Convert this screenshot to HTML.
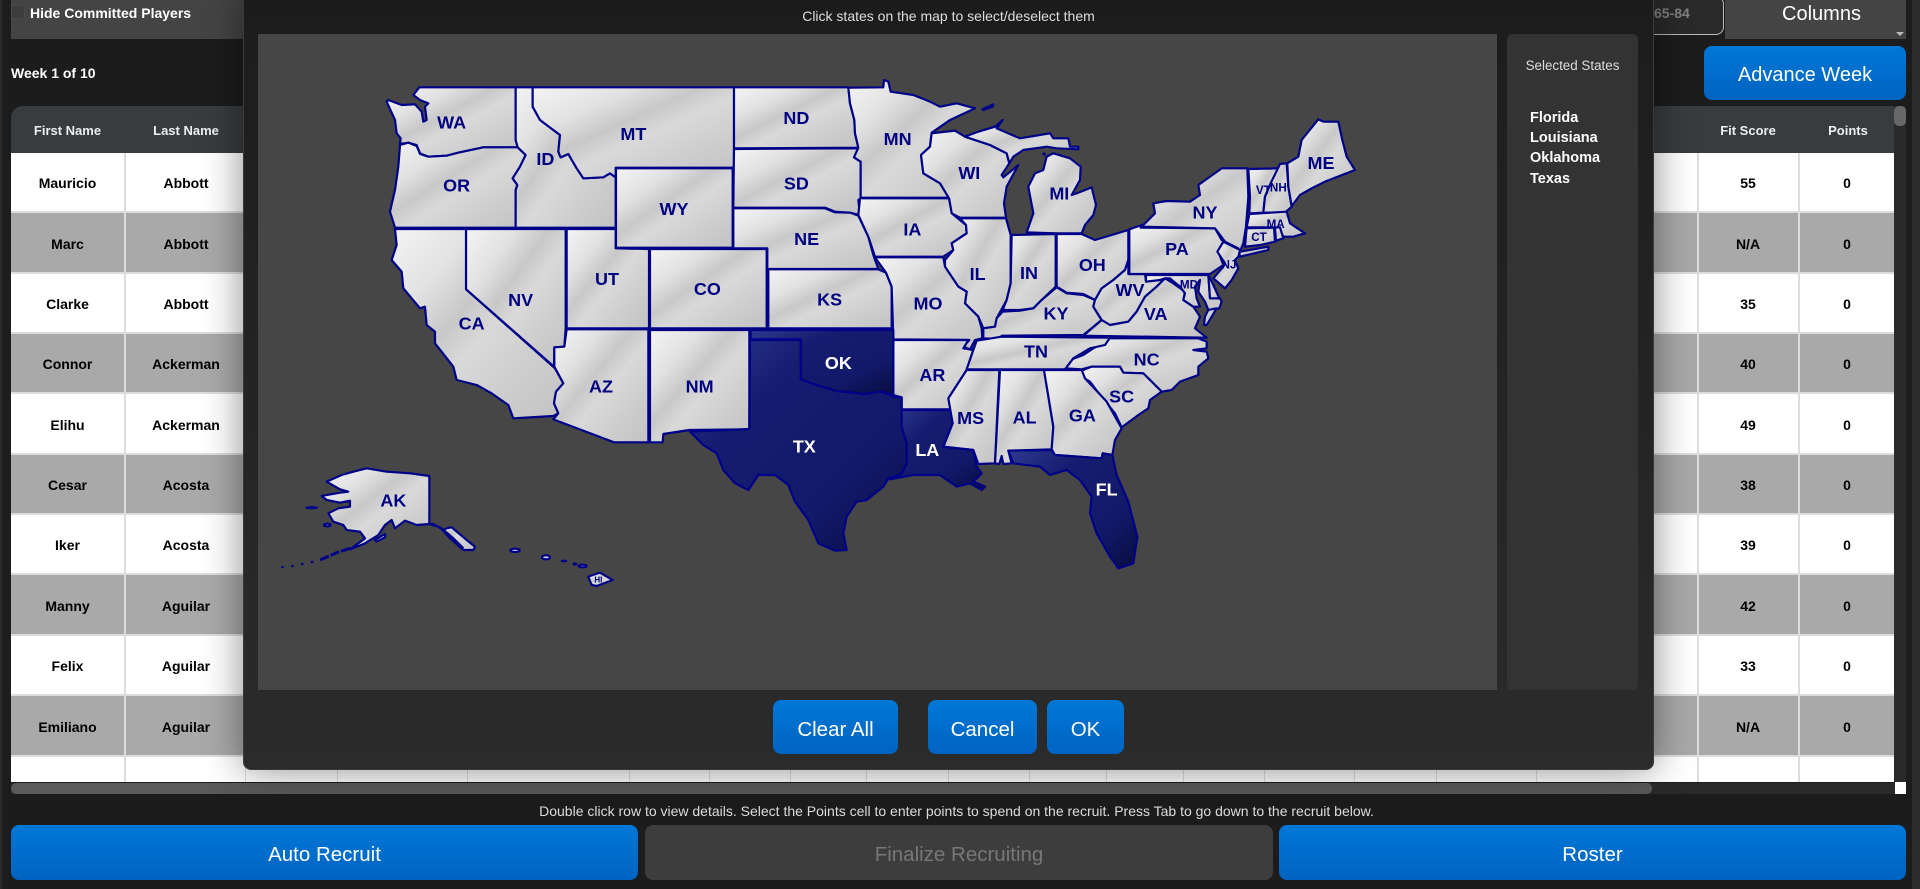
<!DOCTYPE html>
<html><head><meta charset="utf-8"><title>Recruiting</title>
<style>
*{box-sizing:border-box}
html,body{margin:0;padding:0;width:1920px;height:889px;overflow:hidden;background:#1c1c1c;font-family:"Liberation Sans",sans-serif;color:#fff}
.a{position:absolute}
.c{position:absolute;display:flex;align-items:center;justify-content:center;white-space:nowrap}
.btn{background:linear-gradient(#0078d7,#0063c1);border-radius:8px;color:#fff;font-size:20px;padding-top:5px}
.row{position:absolute;left:11px;width:1884px;border-bottom:2px solid #ddd;background:#fff;color:#000;font-size:14px;font-weight:bold}
.row.g{background:#a9a9a9}
.row i{position:absolute;top:0;bottom:0;width:2px;background:#ddd}
.row b{position:absolute;top:0;bottom:0;display:flex;align-items:center;justify-content:center;padding-top:2px}
.b1{left:0;width:113px}.b2{left:116px;width:118px}.b3{left:1687px;width:100px}.b4{left:1787px;width:98px}
.i1{left:113px}.i3{left:1686px}.i4{left:1787px}
.s{stroke:#000088;stroke-width:6.5;stroke-linejoin:round;fill:url(#gs)}
.x{stroke:#000088;stroke-width:6.5;stroke-linejoin:round;fill:url(#gx)}
.t{font-family:"Liberation Sans",sans-serif;font-weight:bold;font-size:54px;fill:#000080;text-anchor:middle}
.t2{font-size:35px}
.w{fill:#fff}
</style></head><body>

<div class="a" style="left:0;top:0;width:2px;height:889px;background:#2b2b2b"></div>
<div class="a" style="left:1912px;top:0;width:8px;height:889px;background:#2b2b2b"></div>

<!-- top bar -->
<div class="a" style="left:11px;top:0;width:240px;height:39px;background:#444"></div>
<div class="a" style="left:11px;top:5px;width:14px;height:14px;background:#3d3d3d;border:1px solid #4a4a4a;border-radius:2px"></div>
<div class="a" style="left:30px;top:5px;font-size:14px;font-weight:bold;line-height:16px;white-space:nowrap">Hide Committed Players</div>
<div class="a" style="left:1640px;top:-4px;width:84px;height:39px;background:#2a2a2a;border:1px solid #bbb;border-radius:8px"></div>
<div class="a" style="left:1654px;top:5px;font-size:14px;font-weight:bold;line-height:16px;color:#808080">65-84</div>
<div class="a" style="left:1725px;top:0;width:181px;height:39px;background:#444"></div>
<div class="c" style="left:1731px;top:0;width:181px;height:39px;font-size:20px;padding-bottom:10px">Columns</div>
<div class="a" style="left:1896px;top:32px;width:0;height:0;border-left:4px solid transparent;border-right:4px solid transparent;border-top:4px solid #bbb"></div>
<div class="a" style="left:11px;top:65px;font-size:14px;font-weight:bold;line-height:16px">Week 1 of 10</div>
<div class="c btn" style="left:1704px;top:46px;width:202px;height:54px;padding-top:4px">Advance Week</div>

<!-- table -->
<div class="a" style="left:11px;top:106px;width:1883px;height:47px;background:#383c3f;border-top-left-radius:12px"></div>
<div class="c" style="left:11px;top:106px;width:113px;height:49px;font-size:13px;font-weight:bold;color:#eee">First Name</div>
<div class="c" style="left:127px;top:106px;width:118px;height:49px;font-size:13px;font-weight:bold;color:#eee">Last Name</div>
<div class="c" style="left:1698px;top:106px;width:100px;height:49px;font-size:13px;font-weight:bold;color:#eee">Fit Score</div>
<div class="c" style="left:1799px;top:106px;width:98px;height:49px;font-size:13px;font-weight:bold;color:#eee">Points</div>

<div class="row" style="top:153px;height:60px"><i class="i1"></i><i class="i3"></i><i class="i4"></i><b class="b1">Mauricio</b><b class="b2">Abbott</b><b class="b3">55</b><b class="b4">0</b></div>
<div class="row g" style="top:213px;height:61px"><i class="i1"></i><i class="i3"></i><i class="i4"></i><b class="b1">Marc</b><b class="b2">Abbott</b><b class="b3">N/A</b><b class="b4">0</b></div>
<div class="row" style="top:274px;height:60px"><i class="i1"></i><i class="i3"></i><i class="i4"></i><b class="b1">Clarke</b><b class="b2">Abbott</b><b class="b3">35</b><b class="b4">0</b></div>
<div class="row g" style="top:334px;height:60px"><i class="i1"></i><i class="i3"></i><i class="i4"></i><b class="b1">Connor</b><b class="b2">Ackerman</b><b class="b3">40</b><b class="b4">0</b></div>
<div class="row" style="top:394px;height:61px"><i class="i1"></i><i class="i3"></i><i class="i4"></i><b class="b1">Elihu</b><b class="b2">Ackerman</b><b class="b3">49</b><b class="b4">0</b></div>
<div class="row g" style="top:455px;height:60px"><i class="i1"></i><i class="i3"></i><i class="i4"></i><b class="b1">Cesar</b><b class="b2">Acosta</b><b class="b3">38</b><b class="b4">0</b></div>
<div class="row" style="top:515px;height:60px"><i class="i1"></i><i class="i3"></i><i class="i4"></i><b class="b1">Iker</b><b class="b2">Acosta</b><b class="b3">39</b><b class="b4">0</b></div>
<div class="row g" style="top:575px;height:61px"><i class="i1"></i><i class="i3"></i><i class="i4"></i><b class="b1">Manny</b><b class="b2">Aguilar</b><b class="b3">42</b><b class="b4">0</b></div>
<div class="row" style="top:636px;height:60px"><i class="i1"></i><i class="i3"></i><i class="i4"></i><b class="b1">Felix</b><b class="b2">Aguilar</b><b class="b3">33</b><b class="b4">0</b></div>
<div class="row g" style="top:696px;height:61px"><i class="i1"></i><i class="i3"></i><i class="i4"></i><b class="b1">Emiliano</b><b class="b2">Aguilar</b><b class="b3">N/A</b><b class="b4">0</b></div>
<div class="row" style="top:757px;height:25px;border-bottom:0"><i class="i1"></i><i class="i3"></i><i class="i4"></i>
<i style="left:234px;width:1px"></i><i style="left:326px;width:1px"></i><i style="left:456px;width:1px"></i><i style="left:618px;width:1px"></i><i style="left:698px;width:1px"></i><i style="left:779px;width:1px"></i><i style="left:855px;width:1px"></i><i style="left:937px;width:1px"></i><i style="left:1018px;width:1px"></i><i style="left:1095px;width:1px"></i><i style="left:1172px;width:1px"></i><i style="left:1253px;width:1px"></i><i style="left:1343px;width:1px"></i><i style="left:1425px;width:1px"></i><i style="left:1525px;width:1px"></i></div>

<!-- scrollbars -->
<div class="a" style="left:1894px;top:106px;width:12px;height:676px;background:#2a2a2a"></div>
<div class="a" style="left:1894px;top:106px;width:12px;height:20px;background:#686868;border-radius:5px"></div>
<div class="a" style="left:11px;top:783px;width:1884px;height:11px;background:#2a2a2a"></div>
<div class="a" style="left:11px;top:783px;width:1641px;height:11px;background:#5a5a5a;border-radius:5px"></div>
<div class="a" style="left:1895px;top:782px;width:11px;height:12px;background:#fff"></div>

<!-- bottom -->
<div class="c" style="left:0;top:803px;width:1913px;height:16px;font-size:14px;color:#ddd">Double click row to view details. Select the Points cell to enter points to spend on the recruit. Press Tab to go down to the recruit below.</div>
<div class="c btn" style="left:11px;top:825px;width:627px;height:55px;font-size:20.5px">Auto Recruit</div>
<div class="c" style="left:645px;top:825px;width:628px;height:55px;background:#3d3d3d;border-radius:8px;font-size:20.5px;color:#777;padding-top:5px">Finalize Recruiting</div>
<div class="c btn" style="left:1279px;top:825px;width:627px;height:55px;font-size:20.5px">Roster</div>

<!-- modal -->
<div class="a" style="left:243px;top:-10px;width:1411px;height:780px;background:linear-gradient(#1c1c1c,#2b2b2b);border:1px solid #3a3a3a;border-radius:8px;box-shadow:0 0 40px rgba(0,0,0,.45)"></div>
<div class="c" style="left:244px;top:8px;width:1409px;height:16px;font-size:14px;color:#ddd">Click states on the map to select/deselect them</div>
<div class="a" style="left:258px;top:34px;width:1239px;height:656px;background:#464646"></div>
<div class="a" style="left:1507px;top:34px;width:131px;height:656px;background:#333;border-radius:5px"></div>
<div class="c" style="left:1507px;top:57px;width:131px;height:16px;font-size:13.4px;color:#ddd">Selected States</div>
<div class="a" style="left:1530px;top:108px;font-size:14.5px;font-weight:bold;line-height:20.2px">Florida<br>Louisiana<br>Oklahoma<br>Texas</div>
<div class="c btn" style="left:773px;top:700px;width:125px;height:54px;font-size:20.5px">Clear All</div>
<div class="c btn" style="left:928px;top:700px;width:109px;height:54px;font-size:20.5px">Cancel</div>
<div class="c btn" style="left:1047px;top:700px;width:77px;height:54px;font-size:20.5px">OK</div>

<svg class="a" style="left:0;top:0" width="1920" height="889" viewBox="0 0 1920 889" xmlns="http://www.w3.org/2000/svg">
<defs>
<linearGradient id="gs" x1="0" y1="0" x2="1" y2="1"><stop offset="0" stop-color="#f4f4f4"/><stop offset=".25" stop-color="#e2e2e2"/><stop offset=".42" stop-color="#c8c8c8"/><stop offset=".55" stop-color="#d9d9d9"/><stop offset=".75" stop-color="#cecece"/><stop offset="1" stop-color="#c2c2c2"/></linearGradient>
<linearGradient id="gx" x1="0" y1="0" x2="1" y2="1"><stop offset="0" stop-color="#2e3a8e"/><stop offset=".3" stop-color="#151d70"/><stop offset=".7" stop-color="#12196a"/><stop offset="1" stop-color="#090c40"/></linearGradient>
</defs>
<g transform="translate(370 70) scale(.33333)">
<!-- west -->
<polygon class="s" points="148,52 437,52 437,210 443,232 340,232 265,248 230,257 175,260 150,250 140,225 115,218 90,222 92,205 80,190 75,150 50,95 55,90 95,105 135,103 155,125 160,155 170,150 165,110 175,100 150,90 130,75"/>
<polygon class="s" points="90,225 115,218 140,228 150,252 175,260 230,257 265,248 340,232 443,232 467,255 450,290 428,325 442,345 437,360 437,473 75,473 60,425 75,360 85,290"/>
<polygon class="s" points="437,52 488,52 488,110 510,150 570,195 565,245 572,262 595,252 620,295 640,325 700,322 720,310 737,322 737,473 437,473 437,360 442,345 428,325 450,290 467,255 443,232 437,210"/>
<polygon class="s" points="488,52 1092,52 1092,293 737,293 737,322 720,310 700,322 640,325 620,295 595,252 572,262 565,245 570,195 510,150 488,110"/>
<polygon class="s" points="738,295 1088,295 1088,533 738,533"/>
<polygon class="s" points="1092,52 1435,52 1440,100 1453,150 1455,190 1465,233 1092,235"/>
<polygon class="s" points="1092,237 1465,235 1452,262 1472,275 1472,385 1465,390 1470,435 1440,428 1395,425 1365,413 1090,413"/>
<polygon class="s" points="1090,415 1365,415 1395,427 1440,428 1465,437 1495,500 1510,555 1525,597 1192,597 1192,535 1090,535"/>
<polygon class="s" points="1195,598 1525,598 1548,608 1565,650 1565,775 1195,775"/>
<polygon class="s" points="840,537 1190,537 1190,775 840,775"/>
<polygon class="s" points="590,477 737,477 737,535 837,537 837,775 590,775"/>
<polygon class="s" points="288,477 587,477 587,775 583,830 553,832 552,890 288,658"/>
<polygon class="s" points="75,477 288,477 288,658 555,895 580,940 558,965 552,1000 565,1030 550,1038 430,1045 415,1005 365,970 320,945 260,930 250,890 195,820 195,785 170,765 165,710 150,715 100,655 95,605 65,570 80,525"/>
<polygon class="s" points="590,778 835,778 835,1117 733,1117 550,1048 565,1030 552,1000 558,965 580,940 553,890 553,832 583,830"/>
<polygon class="s" points="840,780 1138,780 1138,1078 958,1080 880,1092 878,1117 840,1117"/>

<!-- north/east, zoom 4 coordinates -->
<g transform="translate(1440 0)">
<polygon class="s" points="-5,53 100,52 102,30 115,35 122,65 190,75 240,95 270,110 320,100 375,115 300,150 245,188 240,230 213,255 220,310 270,340 297,383 32,383 32,275 12,262 25,233 15,190 13,150 0,100"/>
<polygon class="s" points="397,118 430,103 428,110 400,120"/>
<polygon class="s" points="245,190 315,182 345,200 420,225 470,250 478,280 455,315 460,322 505,285 470,350 462,400 468,443 330,443 305,430 297,385 270,340 220,310 213,255 240,230"/>
<polygon class="s" points="345,200 385,185 435,170 458,150 440,175 510,205 600,190 610,205 655,205 660,230 685,230 685,238 620,235 590,230 520,240 490,260 478,280 470,250 420,225"/>
<polygon class="s" points="530,487 550,430 535,350 555,310 580,300 590,260 610,250 660,265 692,290 690,330 665,375 680,370 725,352 738,405 730,435 705,465 695,490 618,490"/>
<circle cx="582" cy="252" r="5" fill="#000088"/>
<polygon class="s" points="30,385 297,385 305,430 348,465 350,490 305,520 310,540 280,560 75,560 55,500 25,435"/>
<polygon class="s" points="330,445 468,445 482,495 482,640 470,690 440,745 435,770 400,775 385,740 345,700 350,665 325,650 285,590 285,570 310,540 305,520 350,490 348,465"/>
<polygon class="s" points="485,495 617,492 617,650 575,690 550,715 510,720 458,720 470,690 482,640"/>
<polygon class="s" points="620,492 695,492 735,510 835,480 835,570 825,600 790,630 755,655 735,690 700,672 650,668 620,650"/>
<polygon class="s" points="458,725 510,722 550,715 575,690 620,652 650,670 700,675 735,690 730,710 755,750 700,795 455,797 455,808 400,805 400,775 435,770 440,745"/>
<polygon class="s" points="75,562 280,562 285,590 325,650 350,665 345,700 385,740 395,775 397,805 375,810 360,838 340,830 358,810 130,808 125,650 108,608"/>
<polygon class="s" points="835,570 835,612 885,612 888,635 915,625 945,625 920,650 885,680 860,725 835,755 780,765 755,750 730,710 735,690 755,655 790,630 825,600"/>
<polygon class="s" points="700,797 755,750 780,765 835,755 860,725 885,680 920,650 945,625 970,640 1005,665 1000,690 1030,710 1050,740 1035,775 1070,803"/>
<polygon class="s" points="838,478 875,465 872,473 1095,475 1115,510 1125,515 1105,545 1120,585 1080,612 838,612"/>
<polygon class="s" points="875,470 915,430 910,400 950,393 1020,395 1050,375 1045,345 1115,295 1192,295 1195,380 1188,470 1180,520 1170,545 1255,530 1255,540 1170,560 1165,535 1125,515 1095,475"/>
<polygon class="s" points="1195,297 1285,295 1262,340 1245,380 1240,428 1198,430 1200,380"/>
<polygon class="s" points="1290,282 1310,280 1315,350 1325,410 1305,428 1240,428 1245,380 1262,340"/>
<polygon class="s" points="1312,280 1345,260 1355,210 1405,148 1420,155 1465,155 1477,210 1490,260 1515,300 1450,325 1425,335 1385,355 1350,375 1325,408 1315,350"/>
<polygon class="s" points="1198,432 1310,425 1320,460 1365,490 1330,500 1300,500 1285,472 1190,472"/>
<polygon class="s" points="1190,475 1272,473 1275,515 1230,525 1185,530"/>
<polygon class="s" points="1275,473 1290,472 1300,505 1278,512"/>
</g>

<!-- mid-atlantic, zoom 9 coordinates -->
<g transform="translate(2430 480)">
<polygon class="s" points="130,35 180,60 175,80 165,90 175,115 155,150 135,175 100,145 130,110 135,100 112,65"/>
<polygon class="s" points="-102,135 85,135 90,205 120,205 125,215 118,235 85,240 75,215 55,185 60,150 45,170 50,205 60,230 40,230 10,210 15,190 0,170 -30,145 -45,145 -60,150 -102,155"/>
<polygon class="s" points="85,135 90,205 118,205 100,165"/>
<polygon class="s" points="85,240 110,235 80,285 72,285 75,260"/>
</g>

<!-- carolinas, zoom 10 coordinates -->
<g transform="translate(2070 750)">
<polygon class="s" points="15,145 30,120 70,105 100,85 130,70 148,55 415,55 440,65 440,85 400,90 440,95 445,115 415,140 415,165 360,185 335,210 305,215 250,160 190,158 180,140 95,140 65,148"/>
<polygon class="s" points="65,152 95,140 180,140 190,158 250,160 305,215 270,240 265,265 235,285 185,322 165,280 120,225 90,185 65,170"/>
</g>

<!-- south, zoom 5 coordinates -->
<g transform="translate(930 750)">
<polygon class="s" points="640,60 865,60 850,85 880,90 860,150 805,235 812,268 665,268 665,232 640,225"/>
<polygon class="s" points="860,150 958,150 945,430 895,432 880,390 790,380 818,310 805,235"/>
<polygon class="s" points="960,150 1092,150 1120,320 1115,388 985,392 995,430 970,432 965,408 958,432 945,430"/>
<polygon class="s" points="1092,150 1205,150 1215,175 1280,245 1325,325 1305,360 1297,405 1268,400 1265,415 1125,405 1115,388 1120,320"/>
<polygon class="s" points="890,62 965,50 1290,53 1275,75 1230,85 1180,115 1155,148 860,148 880,90"/>
<polygon class="x" points="212,30 640,30 640,225 605,215 550,222 470,213 400,192 362,178 362,58 212,58"/>
<polygon class="x" points="210,60 362,60 362,178 400,192 470,213 550,222 605,215 640,230 665,232 665,320 680,370 680,430 665,462 625,475 610,500 560,540 530,545 500,590 490,640 500,690 465,692 415,670 385,600 345,545 325,495 285,465 235,465 205,510 165,490 130,450 110,400 70,375 30,335 208,327"/>
<polygon class="x" points="665,270 810,270 818,310 790,380 880,390 890,440 905,460 880,485 915,500 905,510 870,490 830,500 780,465 700,465 630,478 665,462 680,430 680,370 665,320"/>
<polygon class="x" points="985,392 1115,390 1125,405 1265,415 1268,400 1297,405 1310,465 1345,545 1372,650 1360,730 1315,745 1290,710 1250,640 1230,580 1235,530 1200,480 1160,450 1110,465 1080,440 1000,430"/>
</g>

<!-- AK / HI, zoom 6 coordinates -->
<g transform="translate(-300 1140)">
<polygon class="s" points="290,55 350,65 420,70 478,78 478,222 440,225 405,212 375,235 365,210 345,225 325,255 285,280 240,298 285,265 270,245 230,240 220,225 190,215 175,190 205,175 240,170 240,152 210,158 170,150 155,138 210,128 235,125 210,118 170,95 215,75 250,65"/>
<polygon class="s" points="478,222 510,232 540,265 580,300 610,300 615,290 590,270 545,232 530,235 520,240 490,222"/>
<polyline points="515,235 550,265 580,295" fill="none" stroke="#000088" stroke-width="7"/>
<polygon class="s" points="315,270 345,252 345,262 320,275"/>
<polyline points="240,295 200,308 145,332" fill="none" stroke="#000088" stroke-width="9" stroke-dasharray="28 6"/>
<polyline points="130,335 70,348 30,352" fill="none" stroke="#000088" stroke-width="6" stroke-dasharray="8 22"/>
<ellipse cx="125" cy="173" rx="20" ry="5" fill="#000088"/>
<ellipse class="s" cx="172" cy="225" rx="10" ry="4"/>
<ellipse class="s" cx="735" cy="301" rx="14" ry="5"/>
<ellipse class="s" cx="828" cy="322" rx="12" ry="6"/>
<ellipse cx="882" cy="333" rx="10" ry="4" fill="#000088"/>
<ellipse cx="915" cy="342" rx="7" ry="5" fill="#000088"/>
<ellipse class="s" cx="938" cy="348" rx="12" ry="4"/>
<polygon class="s" points="955,380 990,368 1028,390 980,408 965,405"/>
<text class="t" x="370" y="170">AK</text>
<text class="t" x="985" y="398" style="font-size:24px">HI</text>
</g>

<!-- labels -->
<text class="t" x="245" y="175">WA</text><text class="t" x="260" y="365">OR</text><text class="t" x="526" y="285">ID</text><text class="t" x="790" y="210">MT</text><text class="t" x="912" y="435">WY</text><text class="t" x="1279" y="162">ND</text><text class="t" x="1279" y="358">SD</text><text class="t" x="1310" y="525">NE</text><text class="t" x="305" y="778">CA</text><text class="t" x="452" y="708">NV</text><text class="t" x="711" y="645">UT</text><text class="t" x="1012" y="675">CO</text><text class="t" x="1379" y="707">KS</text><text class="t" x="693" y="967">AZ</text><text class="t" x="989" y="967">NM</text>
<g transform="translate(1440 0)">
<text class="t" x="143" y="225">MN</text><text class="t" x="358" y="327">WI</text><text class="t" x="628" y="388">MI</text><text class="t" x="187" y="497">IA</text><text class="t" x="383" y="630">IL</text><text class="t" x="537" y="627">IN</text><text class="t" x="727" y="603">OH</text><text class="t" x="618" y="748">KY</text><text class="t" x="234" y="718">MO</text><text class="t" x="840" y="678">WV</text><text class="t" x="917" y="750">VA</text><text class="t" x="981" y="555">PA</text><text class="t" x="1065" y="445">NY</text><text class="t" x="1413" y="297">ME</text>
<text class="t t2" x="1240" y="372">VT</text><text class="t t2" x="1285" y="365">NH</text><text class="t t2" x="1277" y="474">MA</text><text class="t t2" x="1227" y="513">CT</text><text class="t t2" x="1137" y="596">NJ</text><text class="t t2" x="1017" y="656">MD</text>
</g>
<g transform="translate(930 750)">
<text class="t" x="1068" y="113">TN</text><text class="t" x="1400" y="137">NC</text><text class="t" x="757" y="183">AR</text><text class="t" x="872" y="312">MS</text><text class="t" x="1034" y="310">AL</text><text class="t" x="1207" y="305">GA</text><text class="t" x="1325" y="247">SC</text>
<text class="t w" x="475" y="147">OK</text><text class="t w" x="373" y="397">TX</text><text class="t w" x="742" y="408">LA</text><text class="t w" x="1280" y="527">FL</text>
</g>
</g>
</svg>
</body></html>
